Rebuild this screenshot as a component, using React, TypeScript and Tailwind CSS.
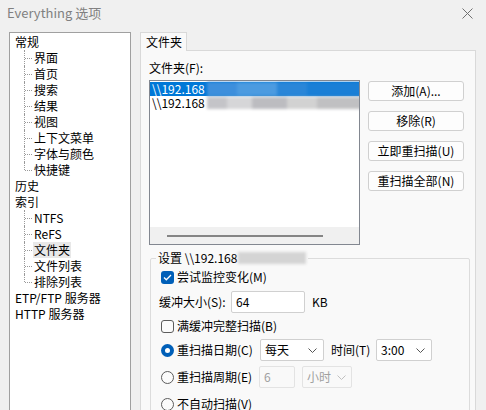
import React from "react";

type Node = { label: string; children?: string[] };

const tree: Node[] = [
  { label: "常规", children: ["界面", "首页", "搜索", "结果", "视图", "上下文菜单", "字体与颜色", "快捷键"] },
  { label: "历史" },
  { label: "索引", children: ["NTFS", "ReFS", "文件夹", "文件列表", "排除列表"] },
  { label: "ETP/FTP 服务器" },
  { label: "HTTP 服务器" },
];

function Chevron({ color = "#555" }: { color?: string }) {
  return (
    <svg width="9" height="5" viewBox="0 0 9 5" className="shrink-0">
      <path d="M0.5 0.5L4.5 4.5L8.5 0.5" fill="none" stroke={color} strokeWidth="1" />
    </svg>
  );
}

function Checkbox({ checked }: { checked: boolean }) {
  if (checked) {
    return (
      <span className="w-[13px] h-[13px] rounded-[3px] bg-[#005fb8] flex items-center justify-center shrink-0">
        <svg width="9" height="7" viewBox="0 0 9 7">
          <path d="M1 3.5L3.3 5.8L8 1" fill="none" stroke="#fff" strokeWidth="1.3" />
        </svg>
      </span>
    );
  }
  return <span className="w-[13px] h-[13px] rounded-[3px] border border-[#5c5c5c] bg-[#fbfbfb] shrink-0" />;
}

function Radio({ checked }: { checked: boolean }) {
  if (checked) {
    return (
      <span className="w-[13px] h-[13px] rounded-full bg-[#005fb8] flex items-center justify-center shrink-0">
        <span className="w-[5px] h-[5px] rounded-full bg-white" />
      </span>
    );
  }
  return <span className="w-[13px] h-[13px] rounded-full border border-[#5c5c5c] bg-[#fbfbfb] shrink-0" />;
}

function Btn({ children }: { children: React.ReactNode }) {
  return (
    <div className="w-[96px] h-[20px] rounded-[3px] border border-[#d0d0d0] bg-[#fdfdfd] flex items-center justify-center text-[12px]">
      {children}
    </div>
  );
}

export default function App() {
  return (
    <div className="w-[486px] h-[410px] overflow-hidden bg-[#f0f0f0] font-['Noto_Sans_CJK_SC',sans-serif] text-[12px] leading-[16px] text-black flex flex-col">
      {/* title bar */}
      <div className="h-[26px] shrink-0 flex items-center justify-between pl-[7px] pr-[13px]">
        <span className="text-[13px] text-[#808080]">Everything 选项</span>
        <svg width="11" height="11" viewBox="0 0 11 11">
          <path d="M0.5 0.5L10.5 10.5M10.5 0.5L0.5 10.5" fill="none" stroke="#707070" strokeWidth="1" />
        </svg>
      </div>

      <div className="flex flex-1 min-h-0 pl-[9px] pt-[6px] gap-[9px]">
        {/* tree */}
        <div className="w-[122px] h-[400px] shrink-0 border border-[#a0a0a0] bg-white pl-[5px] pt-[1px]">
          {tree.map((n) => (
            <div key={n.label}>
              <div className="h-[16px] flex items-center whitespace-nowrap">{n.label}</div>
              {n.children?.map((c, i) => {
                const last = i === n.children!.length - 1;
                return (
                  <div key={c} className="h-[16px] flex items-center whitespace-nowrap">
                    <span className="relative w-[18px] h-[16px] shrink-0">
                      <span
                        className={
                          "absolute left-[9px] top-0 border-l border-dotted border-[#9a9a9a] " +
                          (last ? "h-[8px]" : "h-[16px]")
                        }
                      />
                      <span className="absolute left-[10px] top-[8px] w-[7px] border-t border-dotted border-[#9a9a9a]" />
                    </span>
                    <span className={c === "文件夹" ? "bg-[#e8e8e8] px-[1px]" : "px-[1px]"}>{c}</span>
                  </div>
                );
              })}
            </div>
          ))}
        </div>

        {/* right side */}
        <div className="w-[336px] shrink-0 flex flex-col">
          <div className="h-[18px] flex">
            <div className="relative z-10 h-[19px] w-[47px] border border-b-0 border-[#d9d9d9] bg-[#f9f9f9] flex items-center pl-[5px]">
              文件夹
            </div>
          </div>
          <div className="flex-1 border border-[#d9d9d9] bg-[#f9f9f9] pl-[8px] pt-[9px]">
            <div className="h-[16px] flex items-center">文件夹(F):</div>
            <div className="flex mt-[4px]">
              <div className="w-[211px] h-[165px] border border-[#828790] bg-white flex flex-col overflow-hidden">
                <div className="pt-[1px] flex-1">
                  <div className="h-[14px] bg-[#0078d7] text-white flex items-center pl-[2px]">
                    <span className="whitespace-nowrap leading-[14px]">\\192.168</span>
                    <span className="ml-[2px] h-[14px] w-[160px] shrink-0 flex blur-[1.5px]">
                      <span className="w-[30px] bg-[#3d8fdc]" />
                      <span className="w-[40px] bg-[#4c9be0]" />
                      <span className="w-[30px] bg-[#2a86d8]" />
                      <span className="w-[60px] bg-[#1a7fd6]" />
                    </span>
                  </div>
                  <div className="h-[14px] flex items-center pl-[2px]">
                    <span className="whitespace-nowrap leading-[14px]">\\192.168</span>
                    <span className="ml-[2px] h-[12px] w-[160px] shrink-0 flex blur-[1.5px]">
                      <span className="w-[20px] bg-[#c4c4c8]" />
                      <span className="w-[25px] bg-[#d6d6d8]" />
                      <span className="w-[35px] bg-[#bcbcc0]" />
                      <span className="w-[30px] bg-[#d2d2d2]" />
                      <span className="w-[50px] bg-[#c0c0c2]" />
                    </span>
                  </div>
                </div>
                <div className="h-[17px] bg-[#f0f0f0] flex items-center pl-[17px]">
                  <div className="w-[156px] h-[2px] bg-[#858585]" />
                </div>
              </div>
              <div className="ml-[8px] pt-[1px] flex flex-col gap-[10px]">
                <Btn>添加(A)...</Btn>
                <Btn>移除(R)</Btn>
                <Btn>立即重扫描(U)</Btn>
                <Btn>重扫描全部(N)</Btn>
              </div>
            </div>

            <fieldset className="mt-[5px] ml-[1px] w-[320px] border border-[#dcdcdc] rounded-[2px] pl-[10px]">
              <legend className="-ml-[5px] px-[2px] flex items-center">
                <span>设置 \\192.168</span>
                <span className="ml-[1px] w-[68px] h-[12px] bg-[#d4d4d4] blur-[1.5px]" />
              </legend>
              <div className="h-[22px] flex items-center gap-[3px]">
                <Checkbox checked />
                <span>尝试监控变化(M)</span>
              </div>
              <div className="h-[28px] flex items-center">
                <span className="w-[72px] -ml-[2px] pr-[2px]">缓冲大小(S):</span>
                <div className="w-[74px] h-[22px] border border-[#d0d0d0] rounded-[2px] bg-white flex items-center pl-[4px]">
                  64
                </div>
                <span className="ml-[7px]">KB</span>
              </div>
              <div className="h-[20px] flex items-center gap-[3px]">
                <Checkbox checked={false} />
                <span>满缓冲完整扫描(B)</span>
              </div>
              <div className="h-[28px] flex items-center">
                <div className="w-[99px] flex items-center gap-[3px]">
                  <Radio checked />
                  <span>重扫描日期(C)</span>
                </div>
                <div className="w-[64px] h-[22px] border border-[#d0d0d0] rounded-[2px] bg-white flex items-center justify-between pl-[4px] pr-[6px]">
                  <span>每天</span>
                  <Chevron />
                </div>
                <span className="ml-[7px] w-[45px]">时间(T)</span>
                <div className="w-[56px] h-[22px] border border-[#d0d0d0] rounded-[2px] bg-white flex items-center justify-between pl-[4px] pr-[6px]">
                  <span>3:00</span>
                  <Chevron />
                </div>
              </div>
              <div className="h-[26px] flex items-center">
                <div className="w-[98px] flex items-center gap-[3px]">
                  <Radio checked={false} />
                  <span>重扫描周期(E)</span>
                </div>
                <div className="w-[36px] h-[22px] border border-[#e3e3e3] rounded-[2px] bg-[#f9f9f9] flex items-center pl-[4px] text-[#a0a0a0]">
                  6
                </div>
                <div className="ml-[7px] w-[50px] h-[22px] border border-[#e3e3e3] rounded-[2px] bg-[#f9f9f9] flex items-center justify-between pl-[4px] pr-[5px] text-[#a0a0a0]">
                  <span>小时</span>
                  <Chevron color="#c0c0c0" />
                </div>
              </div>
              <div className="h-[28px] flex items-center gap-[3px]">
                <Radio checked={false} />
                <span>不自动扫描(V)</span>
              </div>
            </fieldset>
          </div>
        </div>
      </div>
    </div>
  );
}
